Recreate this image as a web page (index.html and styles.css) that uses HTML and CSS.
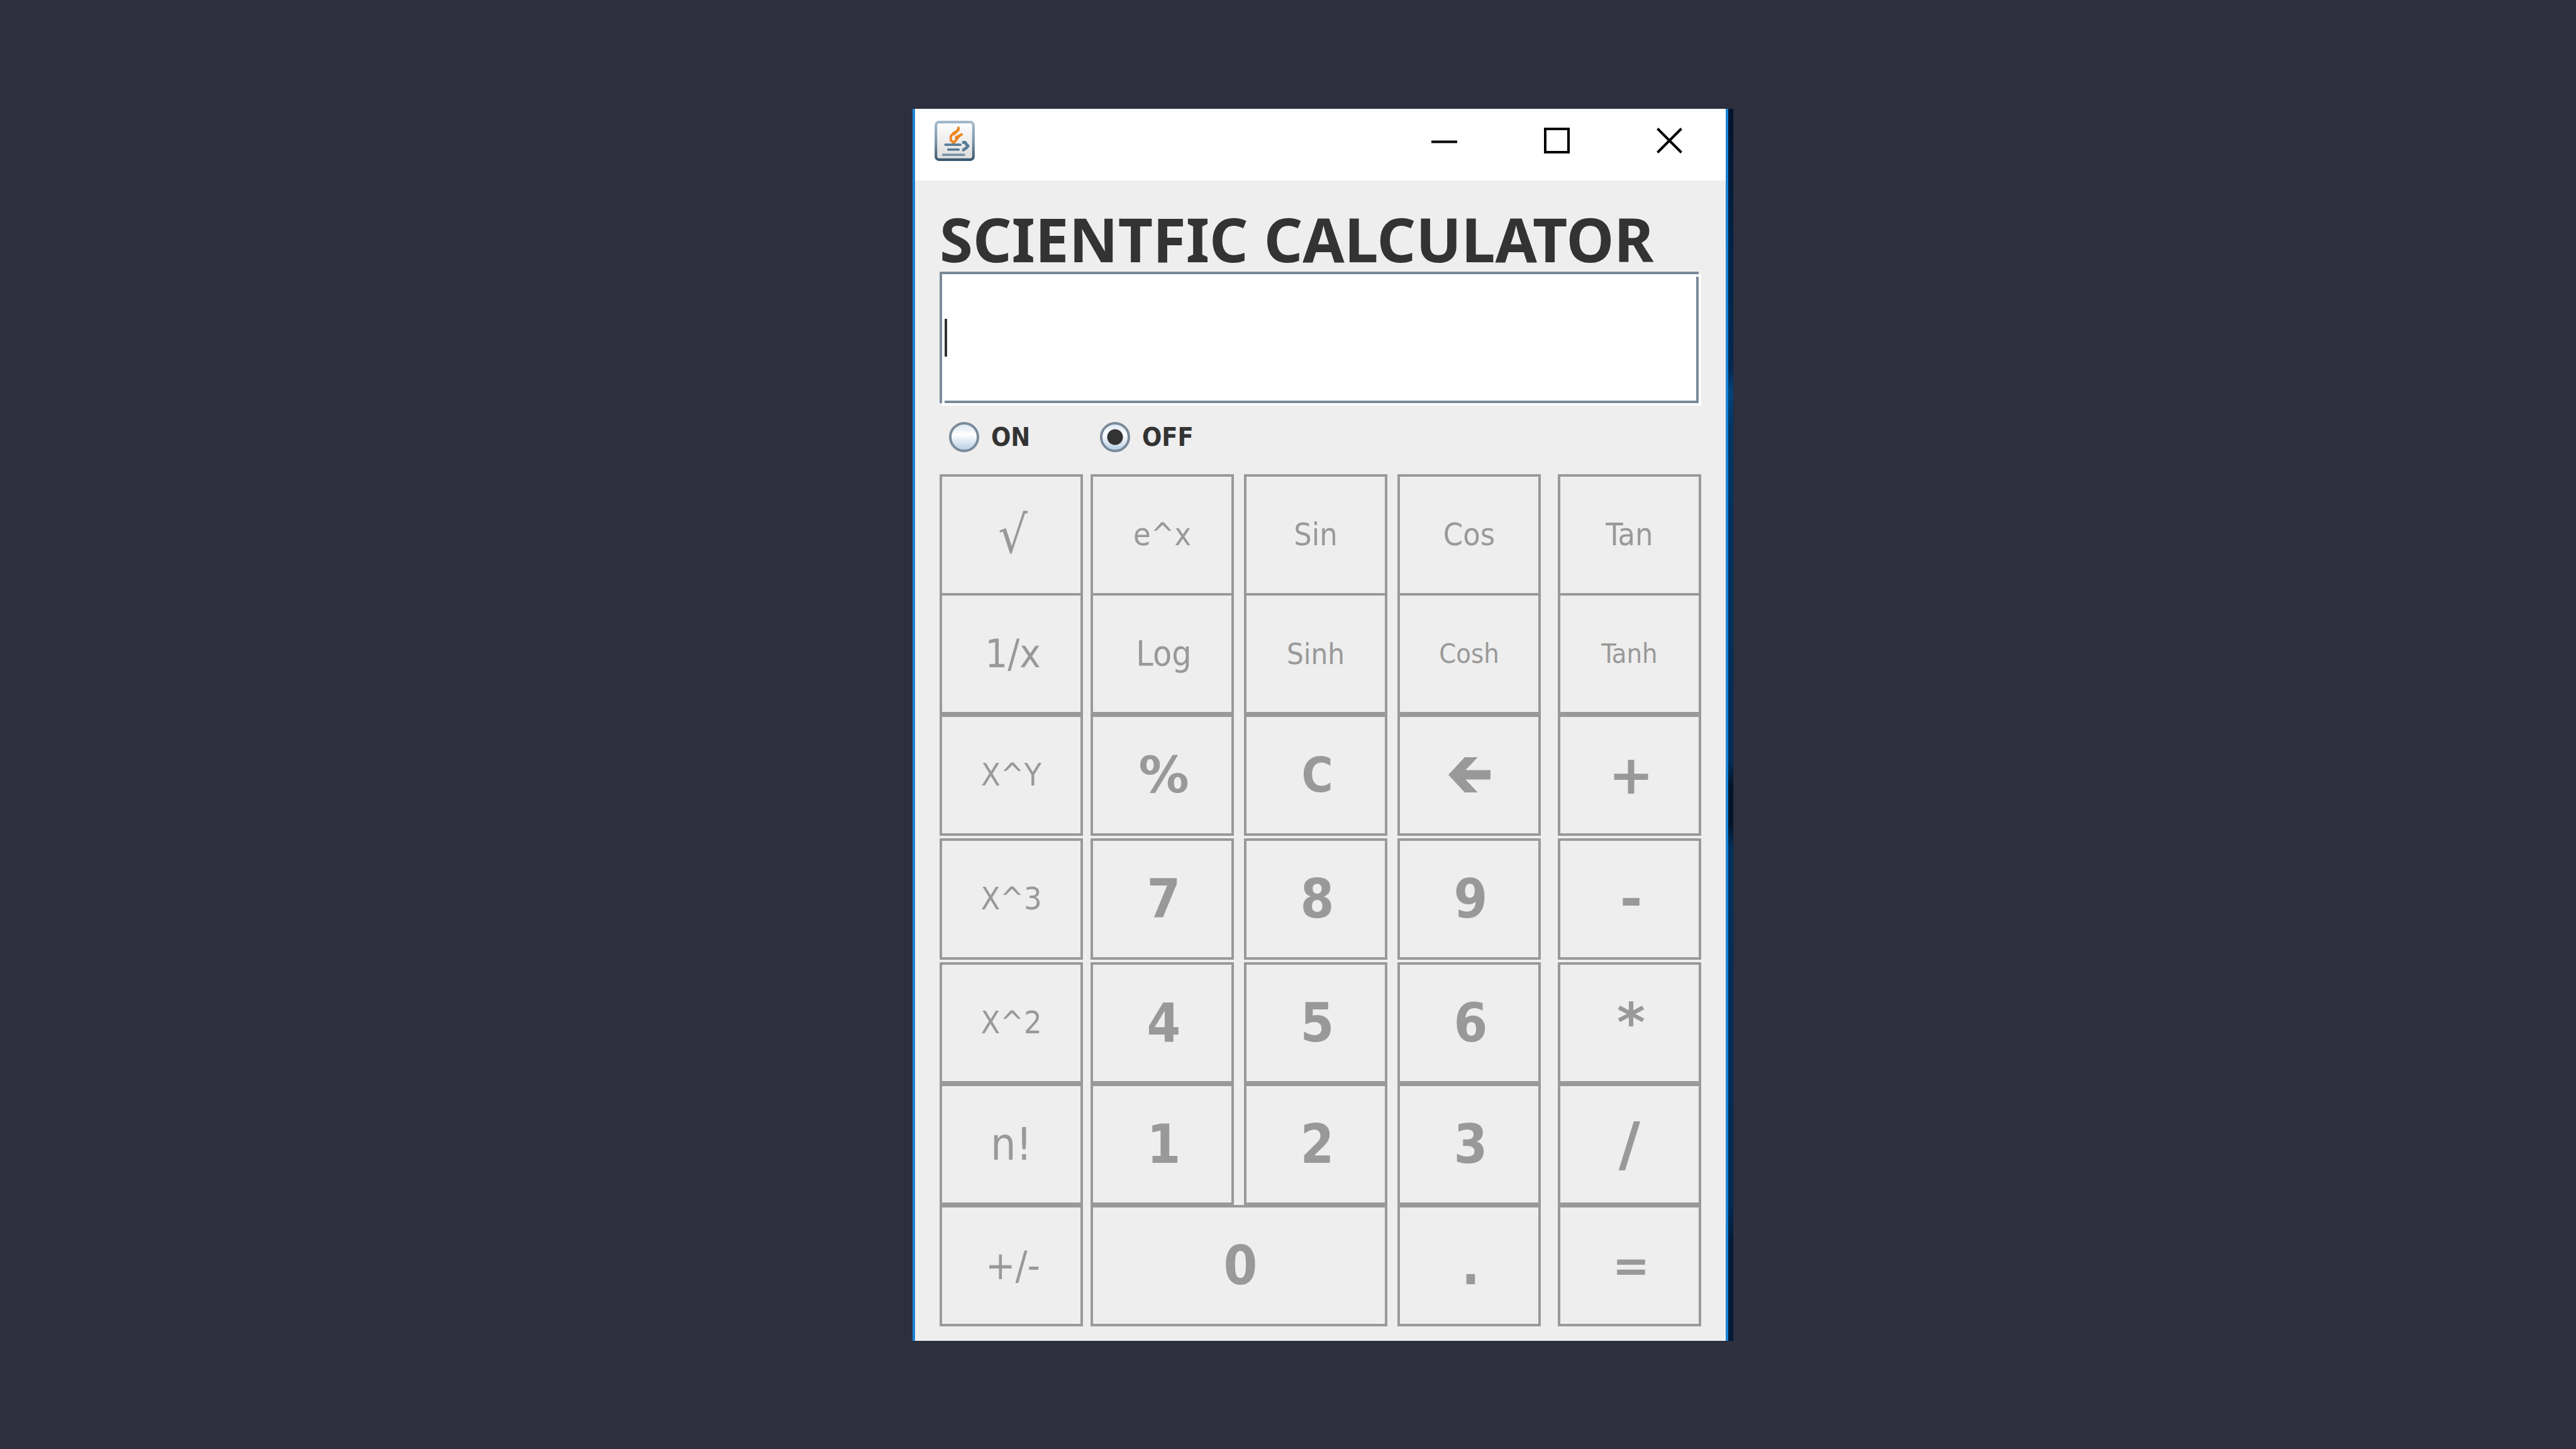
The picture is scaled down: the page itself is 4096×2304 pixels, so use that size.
FILE: index.html
```html
<!DOCTYPE html>
<html lang="en">
<head>
<meta charset="utf-8">
<meta name="viewport" content="width=device-width, initial-scale=1">
<title>Scientific Calculator</title>
<link rel="stylesheet" href="styles.css">
</head>
<body>
<main class="shell">
  <div class="window">
    <header class="titlebar">
      <svg class="app-icon" viewBox="0 0 265 265" aria-hidden="true">
        <defs>
          <linearGradient id="frame" x1="0" y1="0" x2="0" y2="1">
            <stop offset="0" stop-color="#a3b8ca"/>
            <stop offset="0.5" stop-color="#7d96ab"/>
            <stop offset="1" stop-color="#3a5870"/>
          </linearGradient>
          <linearGradient id="plate" x1="0" y1="0" x2="0" y2="1">
            <stop offset="0" stop-color="#ffffff"/>
            <stop offset="1" stop-color="#dcdcdc"/>
          </linearGradient>
        </defs>
        <rect x="9" y="9" width="247" height="247" rx="20" fill="url(#plate)" stroke="url(#frame)" stroke-width="17"/>
        <g fill="none" stroke="#ee8420" stroke-width="16" stroke-linecap="round" stroke-linejoin="round">
          <path d="M157 46 L154 64 L124 82 L107 102 L107 128 L126 146"/>
          <path d="M158 58 L130 88"/>
          <path d="M178 90 L164 98 L142 108 L146 122 L128 144"/>
          <path d="M166 98 L142 124"/>
        </g>
        <g fill="none" stroke="#587b97" stroke-width="16" stroke-linecap="round">
          <path d="M72 158 H170"/>
          <path d="M90 190 H158"/>
          <path d="M56 224 H194" stroke="#7893a9"/>
          <path d="M190 143 H202 L210 156 L220 166 L210 178 L190 192" stroke-width="20" stroke-linejoin="round"/>
        </g>
      </svg>
      <div class="window-controls">
        <button class="window-control" type="button" aria-label="Minimize">
          <svg class="control-icon" viewBox="0 0 41 41"><path d="M0 22.5H41"/></svg>
        </button>
        <button class="window-control" type="button" aria-label="Maximize">
          <svg class="control-icon" viewBox="0 0 41 41"><path d="M2 2H39V39H2Z"/></svg>
        </button>
        <button class="window-control" type="button" aria-label="Close">
          <svg class="control-icon" viewBox="0 0 41 41"><path d="M1.500 1.500L39.500 39.500M39.500 1.500L1.500 39.500"/></svg>
        </button>
      </div>
    </header>

    <div class="content">
      <h1 class="heading">SCIENTFIC CALCULATOR</h1>

      <div class="display">
        <input class="display-field" type="text" aria-label="Display">
        <span class="display-caret"></span>
      </div>

      <div class="power">
        <label class="power-option"><input class="radio" type="radio" name="power">ON</label>
        <label class="power-option"><input class="radio" type="radio" name="power" checked>OFF</label>
      </div>

      <div class="keypad">
        <div class="row row-joined">
          <button class="key root" type="button" disabled>√</button>
          <button class="key fn" type="button" disabled>e^x</button>
          <button class="key fn" type="button" disabled>Sin</button>
          <button class="key fn" type="button" disabled>Cos</button>
          <button class="key fn" type="button" disabled>Tan</button>
        </div>
        <div class="row">
          <button class="key fn-large" type="button" disabled>1/x</button>
          <button class="key fn-medium" type="button" disabled>Log</button>
          <button class="key fn-compact" type="button" disabled>Sinh</button>
          <button class="key fn-small" type="button" disabled>Cosh</button>
          <button class="key fn-small" type="button" disabled>Tanh</button>
        </div>
        <div class="row">
          <button class="key fn" type="button" disabled>X^Y</button>
          <button class="key percent" type="button" disabled>%</button>
          <button class="key clear" type="button" disabled>C</button>
          <button class="key" type="button" aria-label="Backspace" disabled>
            <svg class="back-icon" viewBox="0 0 67 56"><path d="M46.600 0H26L0 28L26 56H46.600L27.400 35.500H67V20.500H27.400Z"/></svg>
          </button>
          <button class="key operator" type="button" disabled>+</button>
        </div>
        <div class="row row-spaced">
          <button class="key fn" type="button" disabled>X^3</button>
          <button class="key digit" type="button" disabled>7</button>
          <button class="key digit" type="button" disabled>8</button>
          <button class="key digit" type="button" disabled>9</button>
          <button class="key operator" type="button" disabled>-</button>
        </div>
        <div class="row row-spaced">
          <button class="key fn" type="button" disabled>X^2</button>
          <button class="key digit" type="button" disabled>4</button>
          <button class="key digit" type="button" disabled>5</button>
          <button class="key digit" type="button" disabled>6</button>
          <button class="key operator" type="button" disabled>*</button>
        </div>
        <div class="row">
          <button class="key factorial" type="button" disabled>n!</button>
          <button class="key digit" type="button" disabled>1</button>
          <button class="key digit" type="button" disabled>2</button>
          <button class="key digit" type="button" disabled>3</button>
          <button class="key divide" type="button" disabled>/</button>
        </div>
        <div class="row">
          <button class="key fn-large" type="button" disabled>+/-</button>
          <button class="key digit key-wide" type="button" disabled>0</button>
          <button class="key digit key-fourth" type="button" disabled>.</button>
          <button class="key equals" type="button" disabled>=</button>
        </div>
      </div>
    </div>
  </div>
</main>
</body>
</html>
```
FILE: styles.css
```css
* {
  box-sizing: border-box;
}

body {
  margin: 0;
  min-height: 100vh;
  display: flex;
  align-items: center;
  justify-content: center;
  padding-left: 111px;
  background: #2d2e3e;
  color: #333;
  font-family: "DejaVu Sans Condensed", "DejaVu Sans", sans-serif;
}

button,
input {
  font-family: inherit;
}

/* The strip of desktop showing along the window's right edge */
.shell {
  width: 100%;
  max-width: 1305px;
  padding-right: 8px;
  background: linear-gradient(#00132c 0%, #001a38 5%, #002447 12%, #002850 21%, #00437c 23%, #003463 26%, #002c56 53%, #001428 55%, #001428 58%, #00305c 60%, #002a52 89%, #001a38 92%, #001a38 100%);
}

.window {
  border: solid #1b83d9;
  border-width: 0 4px;
  background: #eee;
}

.titlebar {
  display: flex;
  align-items: center;
  justify-content: space-between;
  height: 114px;
  padding: 0 0 12px 31px;
  background: #fff;
}

.app-icon {
  width: 64px;
  height: 64px;
}

.window-controls {
  display: flex;
}

.window-control {
  display: flex;
  justify-content: center;
  width: 179px;
  padding: 0;
  border: 0;
  background: none;
}

.control-icon {
  width: 41px;
  height: 41px;
  fill: none;
  stroke: #000;
  stroke-width: 4;
}

.content {
  padding: 41px 39px 23px;
}

.heading {
  margin: 0;
  font-family: "Noto Sans", sans-serif;
  font-size: 96px;
  font-weight: 700;
  line-height: 104px;
  white-space: nowrap;
}

.display {
  position: relative;
  height: 213px;
}

/* Etched border: grey lines with a white highlight outside the lower right */
.display-field {
  display: block;
  width: 100%;
  height: 100%;
  padding: 0 12px;
  border: 0;
  outline: 0;
  font-size: 50px;
  background:
    linear-gradient(#7a8a99, #7a8a99) 0 0 / calc(100% - 4px) 4px no-repeat,
    linear-gradient(#7a8a99, #7a8a99) 0 0 / 4px calc(100% - 4px) no-repeat,
    linear-gradient(#7a8a99, #7a8a99) right 4px bottom 4px / calc(100% - 12px) 4px no-repeat,
    linear-gradient(#7a8a99, #7a8a99) right 4px bottom 4px / 4px calc(100% - 12px) no-repeat,
    linear-gradient(#fff, #fff) right bottom / calc(100% - 4px) calc(100% - 4px) no-repeat;
}

.display-caret {
  position: absolute;
  left: 8px;
  top: 75px;
  width: 4px;
  height: 60px;
  background: #333;
}

.power {
  display: flex;
  align-items: center;
  height: 109px;
  padding: 0 0 8px 15px;
}

.power-option {
  display: flex;
  align-items: center;
  gap: 19px;
  width: 240px;
  font-size: 41px;
  font-weight: 700;
}

.radio {
  appearance: none;
  width: 48px;
  height: 48px;
  margin: 0;
  border: 4px solid #7a8a99;
  border-radius: 50%;
  background: linear-gradient(#dde8f3 0%, #fff 40%, #b8cfe5 100%);
}

.radio:checked {
  background:
    radial-gradient(circle, #333 12px, transparent 13px),
    linear-gradient(#dde8f3 0%, #fff 40%, #b8cfe5 100%);
}

.row {
  display: grid;
  grid-template-columns: 240fr 244fr 244fr 255fr 228fr;
}

.row-spaced {
  margin-top: 4px;
}

.key {
  display: flex;
  align-items: center;
  justify-content: center;
  height: 193px;
  margin: 0 16px 0 0;
  padding: 0;
  border: 4px solid #999;
  background: #eee;
  color: #999;
  line-height: normal;
}

.key:first-child {
  margin-right: 12px;
}

.key:nth-child(4),
.key-fourth {
  margin-right: 27px;
}

.key:last-child {
  margin-right: 0;
}

.key-wide {
  grid-column: span 2;
}

/* First row shares its lower line with the row beneath */
.row-joined .key {
  height: 189px;
  border-bottom: 0;
}

.fn {
  font-size: 50px;
}

.fn-small {
  font-size: 43px;
}

.fn-compact {
  font-size: 47px;
}

.fn-medium {
  font-size: 55px;
}

.fn-large {
  font-size: 63px;
}

.factorial {
  font-size: 71px;
}

.root {
  font-size: 82px;
}

.digit,
.operator,
.divide,
.percent,
.clear,
.equals {
  font-weight: 700;
}

.root,
.fn-large,
.fn-medium,
.digit,
.operator,
.percent,
.clear,
.equals {
  padding-left: 5px;
}

.digit,
.operator {
  font-size: 86px;
}

.operator,
.divide,
.percent,
.equals {
  font-family: "DejaVu Sans", sans-serif;
}

.divide {
  font-size: 94px;
}

.percent {
  font-size: 80px;
}

.clear {
  font-size: 76px;
}

.equals {
  font-size: 71px;
}

.back-icon {
  width: 67px;
  height: 56px;
  fill: #999;
}
```
